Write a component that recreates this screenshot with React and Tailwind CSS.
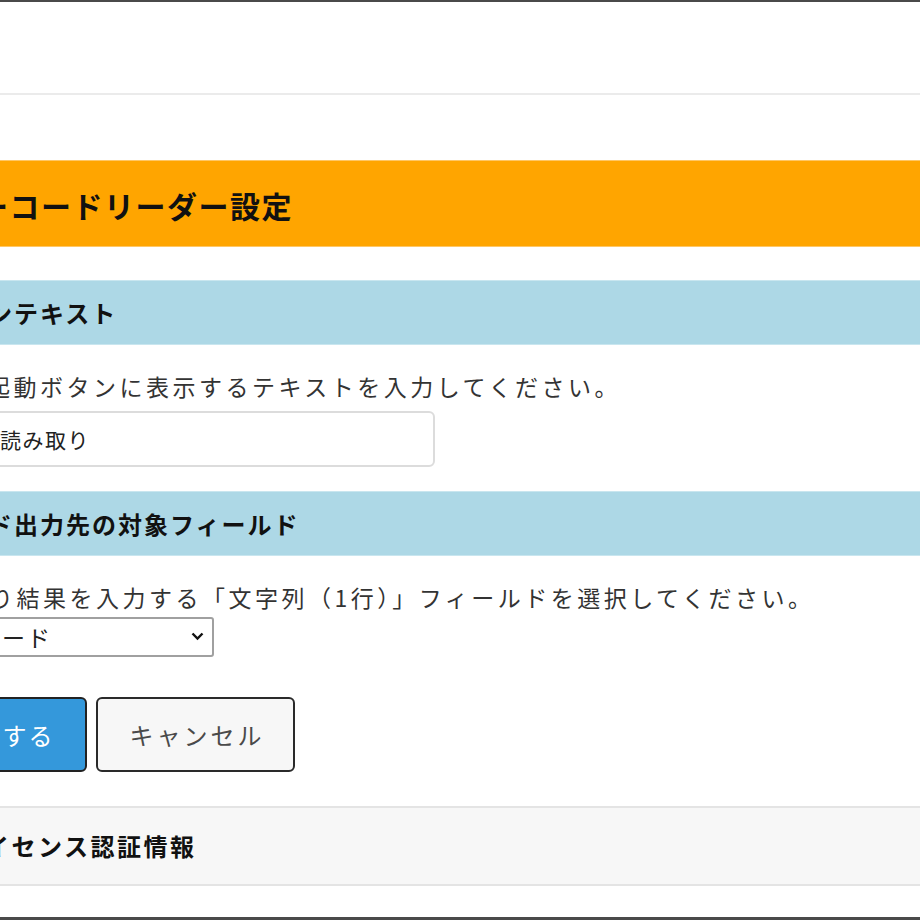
import React from "react";

const jp = { fontFamily: '"Noto Sans CJK JP", "Noto Sans", sans-serif' };

const SectionHead = ({ children, shift }) => (
  <div className="h-[65px] bg-[#add8e6] border-y border-[#c9e6ef] flex items-center overflow-hidden">
    <span className={`${shift} whitespace-nowrap text-[24px] font-bold tracking-[2px] text-[#111]`}>
      {children}
    </span>
  </div>
);

const App = () => {
  return (
    <div
      style={jp}
      className="w-[920px] h-[920px] bg-white overflow-hidden border-t-2 border-b-[3px] border-[#4a4a4a] flex flex-col"
    >
      {/* header area */}
      <div className="h-[93px] shrink-0 border-b-2 border-[#ebebeb]" />

      {/* title */}
      <div className="mt-[65px] h-[87px] shrink-0 bg-[#ffa500] border-y border-[#ffc766] flex items-center overflow-hidden">
        <span className="-ml-[22px] pt-[3px] whitespace-nowrap text-[30px] font-bold tracking-[1.5px] text-[#111]">
          ーコードリーダー設定
        </span>
      </div>

      {/* button text */}
      <div className="mt-[33px] shrink-0">
        <SectionHead shift="-ml-[12px]">ンテキスト</SectionHead>
      </div>
      <div className="pt-[26px] shrink-0 overflow-hidden">
        <p className="-ml-[13px] whitespace-nowrap text-[23px] leading-[30px] tracking-[3.5px] text-[#333]">
          起動ボタンに表示するテキストを入力してください。
        </p>
        <input
          readOnly
          value="読み取り"
          style={jp}
          className="mt-[10px] -ml-[20px] w-[455px] h-[56px] pl-[18px] rounded-md border-2 border-[#dcdcdc] text-[21px] tracking-[1.5px] text-[#222] outline-none"
        />
      </div>

      {/* output field */}
      <div className="mt-[24px] shrink-0">
        <SectionHead shift="-ml-[12px]">ド出力先の対象フィールド</SectionHead>
      </div>
      <div className="pt-[26px] shrink-0 overflow-hidden">
        <p className="-ml-[10px] whitespace-nowrap text-[23px] leading-[30px] tracking-[3.5px] text-[#333]">
          り結果を入力する「文字列（1行）」フィールドを選択してください。
        </p>
        <div className="relative mt-[5px] -ml-[30px] w-[244px] h-[40px]">
          <select
            style={jp}
            className="appearance-none w-full h-full pl-[30px] rounded-[3px] border-2 border-[#a0a0a0] bg-white text-[23px] tracking-[2px] text-[#222] outline-none"
          >
            <option>ード</option>
          </select>
          <svg
            className="absolute right-[10px] top-[15px] pointer-events-none"
            width="13"
            height="9"
            viewBox="0 0 13 9"
          >
            <path d="M1.5 1.5 L6.5 6.5 L11.5 1.5" fill="none" stroke="#111" strokeWidth="2.4" />
          </svg>
        </div>
      </div>

      {/* buttons */}
      <div className="mt-[40px] shrink-0 flex gap-[9px] -ml-[30px]">
        <button
          style={jp}
          className="w-[117px] h-[75px] rounded-md border-2 border-[#222] bg-[#3498db] text-white text-[24px] tracking-[2px]"
        >
          する
        </button>
        <button
          style={jp}
          className="w-[199px] h-[75px] rounded-md border-2 border-[#2a2a2a] bg-[#f7f7f7] text-[#4a4a4a] text-[24px] tracking-[3px] pl-[3px]"
        >
          キャンセル
        </button>
      </div>

      {/* license */}
      <div className="mt-[34px] h-[80px] shrink-0 bg-[#f7f7f7] border-y-2 border-[#e4e4e4] flex items-center overflow-hidden">
        <span className="-ml-[15px] whitespace-nowrap text-[24px] font-bold tracking-[2.5px] text-[#111]">
          イセンス認証情報
        </span>
      </div>
      <div className="flex-1" />
    </div>
  );
};

export default App;
